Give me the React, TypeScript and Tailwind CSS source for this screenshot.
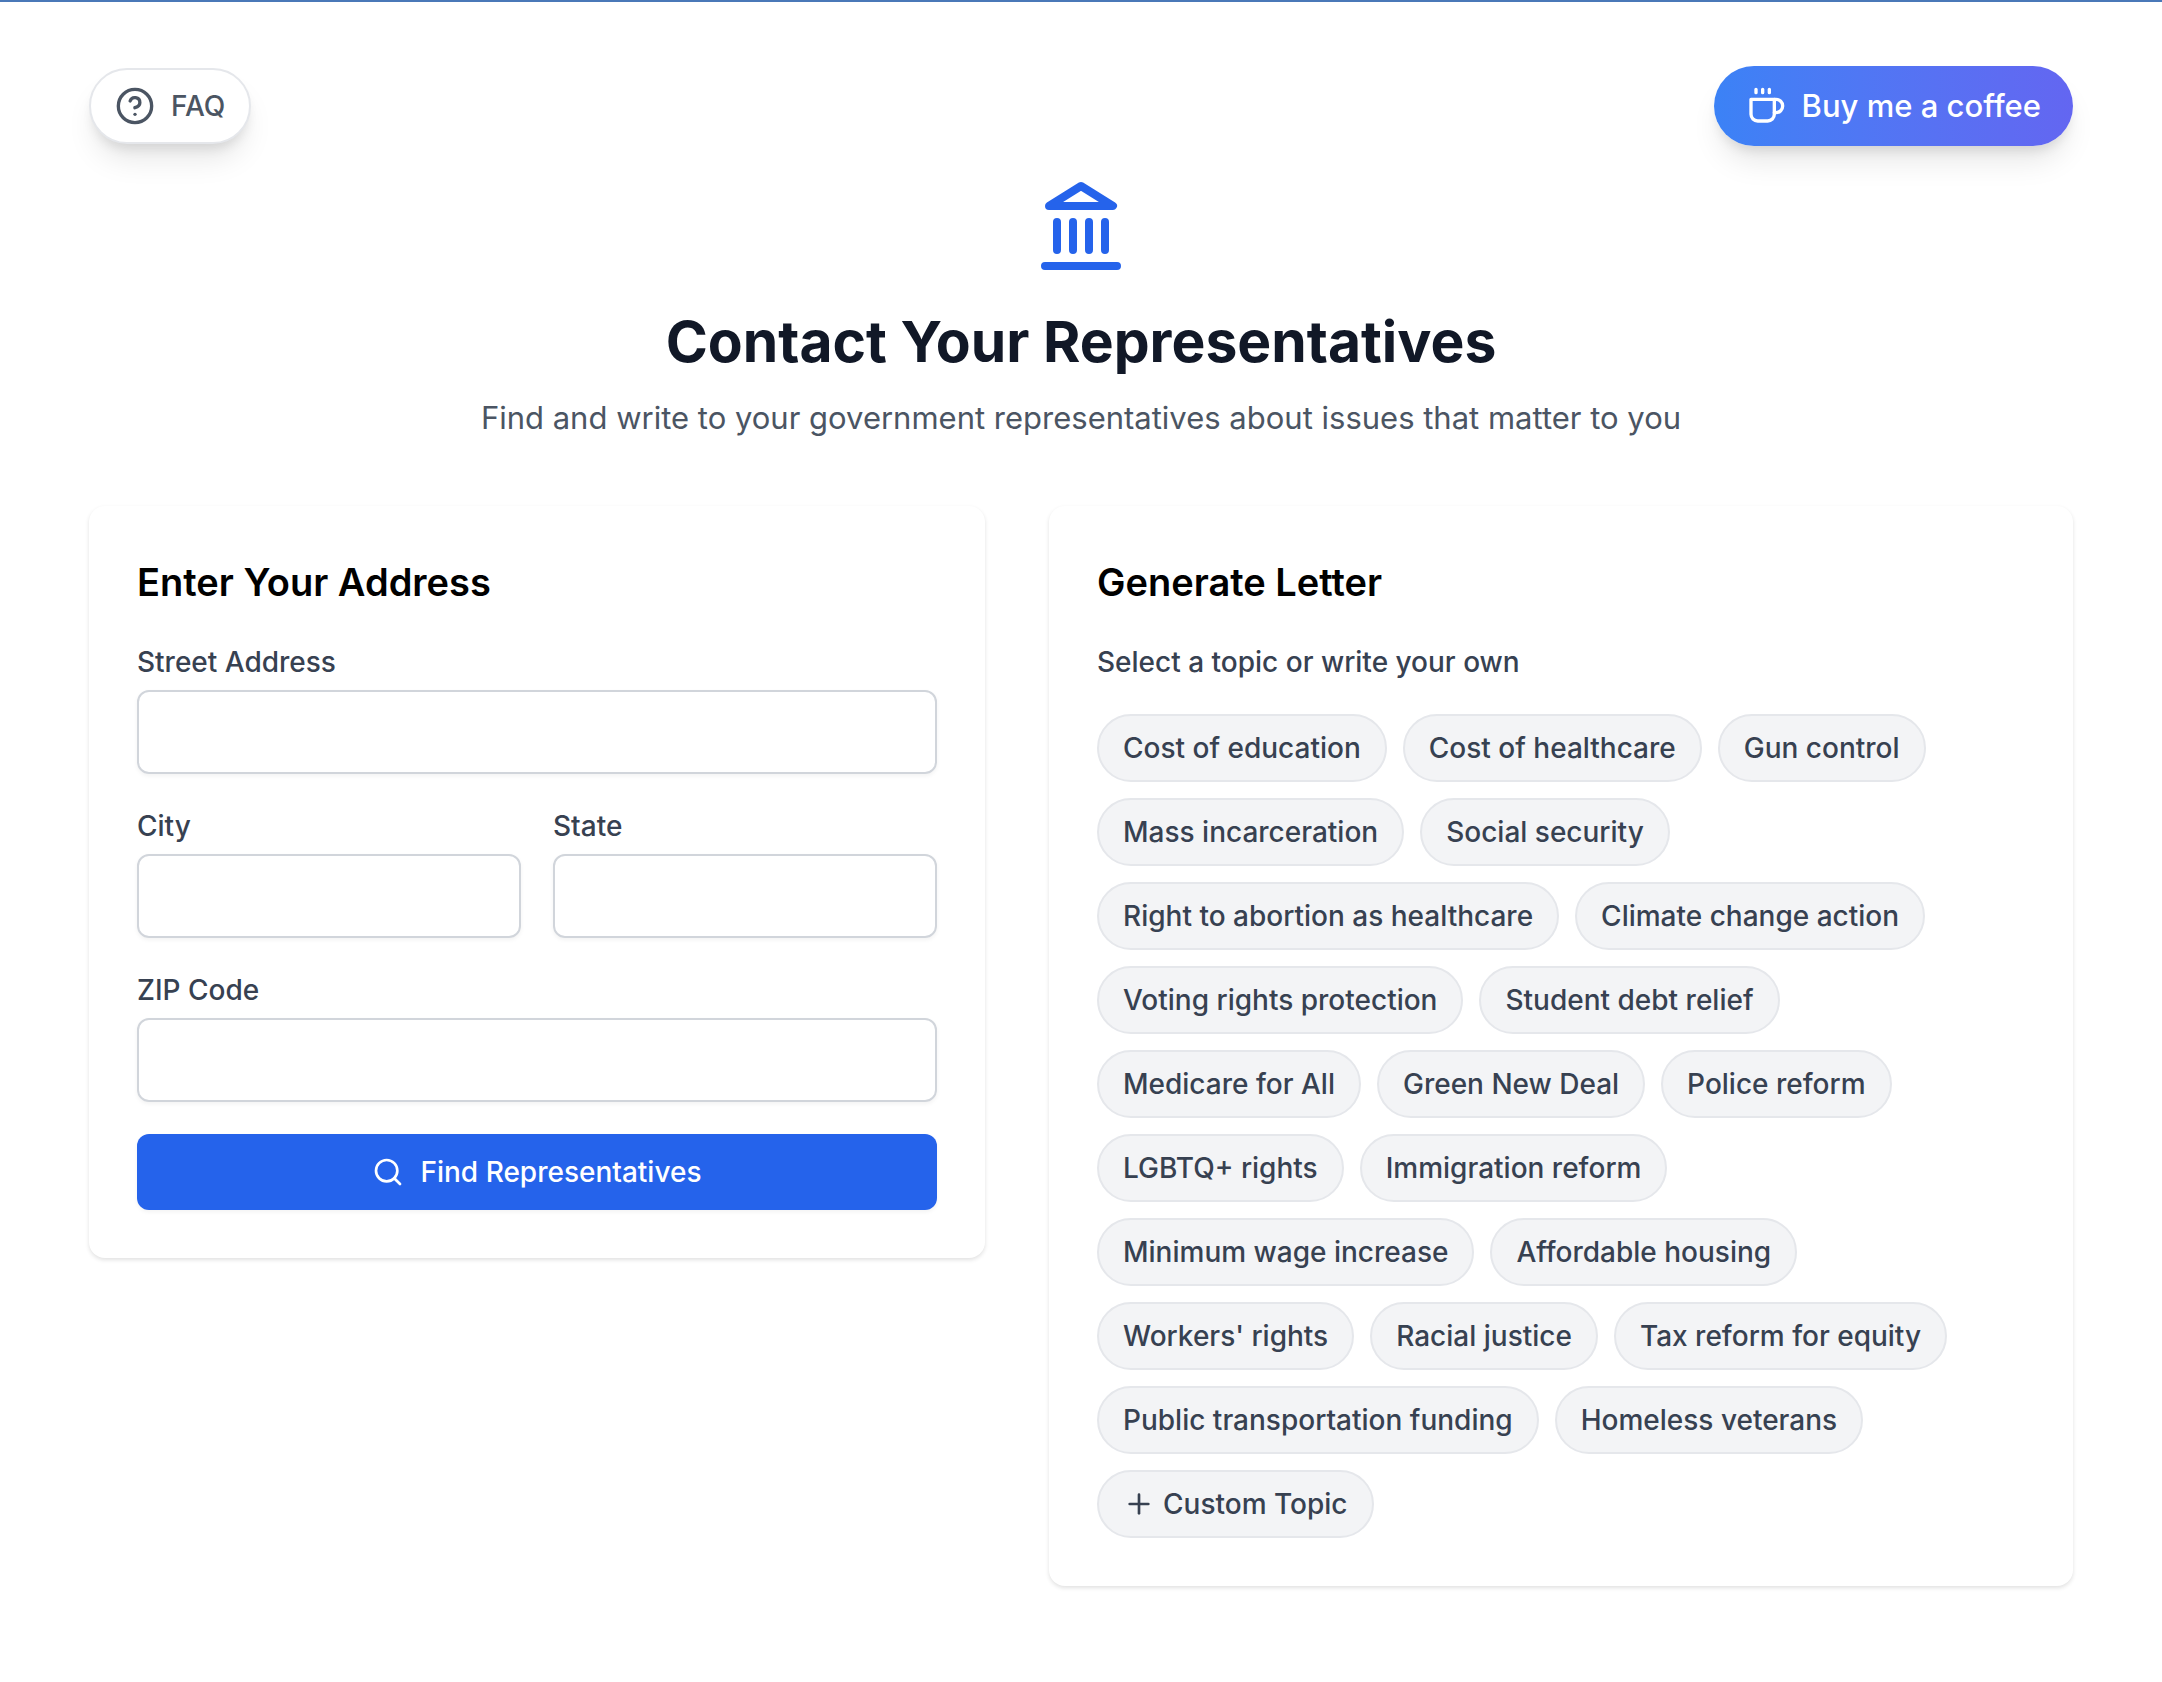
// App.tsx
import React from 'react';
import { CircleHelp, Plus, Search } from 'lucide-react';

const topics = [
    'Cost of education',
    'Cost of healthcare',
    'Gun control',
    'Mass incarceration',
    'Social security',
    'Right to abortion as healthcare',
    'Climate change action',
    'Voting rights protection',
    'Student debt relief',
    'Medicare for All',
    'Green New Deal',
    'Police reform',
    'LGBTQ+ rights',
    'Immigration reform',
    'Minimum wage increase',
    'Affordable housing',
    "Workers' rights",
    'Racial justice',
    'Tax reform for equity',
    'Public transportation funding',
    'Homeless veterans',
];

const CoffeeIcon: React.FC = () => (
    <svg
        className="size-10"
        viewBox="0 0 24 24"
        fill="none"
        stroke="currentColor"
        strokeWidth="2"
        strokeLinecap="round"
        strokeLinejoin="round"
        aria-hidden="true"
    >
        <path d="M17 8h1a4 4 0 1 1 0 8h-1" />
        <path d="M3 8h14v9a4 4 0 0 1-4 4H7a4 4 0 0 1-4-4Z" />
        <path d="M6 2v2M10 2v2M14 2v2" />
    </svg>
);

const LandmarkIcon: React.FC = () => (
    <svg
        className="size-24 text-[#2563eb]"
        viewBox="0 0 24 24"
        fill="none"
        stroke="currentColor"
        strokeWidth="2"
        strokeLinecap="round"
        strokeLinejoin="round"
        aria-hidden="true"
    >
        <path d="M3 22h18M6 18v-7M10 18v-7M14 18v-7M18 18v-7" />
        <path d="M12 2l8 5H4Z" />
    </svg>
);

const Card: React.FC<{ title: string; children: React.ReactNode }> = ({ title, children }) => (
    <section className="bg-white rounded-2xl p-12 shadow-[0_2px_4px_rgba(0,0,0,0.12)]">
        <h2 className="text-[38px] leading-14 font-semibold text-black mb-8">{title}</h2>
        {children}
    </section>
);

const Field: React.FC<{ id: string; label: string }> = ({ id, label }) => (
    <div>
        <label htmlFor={id} className="block text-[28px] leading-10 font-medium text-[#374151] mb-2">
            {label}
        </label>
        <input
            id={id}
            type="text"
            className="block w-full h-21 px-6 text-[28px] rounded-xl border-2 border-[#d1d5db] shadow-[0_2px_4px_rgba(0,0,0,0.05)]"
        />
    </div>
);

const Chip: React.FC<{ children: React.ReactNode }> = ({ children }) => (
    <button
        type="button"
        className="flex items-center gap-2 px-6 py-3 rounded-full border-2 border-[#e5e7eb] bg-[#f3f4f6] text-[28px] leading-10 font-medium text-[#374151]"
    >
        {children}
    </button>
);

const App: React.FC = () => {
    return (
        <div className="min-h-screen bg-white border-t-2 border-[#4a78b8] font-[Inter,sans-serif]">
            <div className="max-w-[2048px] mx-auto px-8 py-16">
                <nav className="flex items-center justify-between mb-8">
                    <button
                        type="button"
                        className="flex items-center gap-4 px-6 py-4 rounded-full border-2 border-[#e5e7eb] bg-white text-[28px] leading-10 font-medium text-[#4b5563] shadow-[0_20px_30px_-6px_rgba(0,0,0,0.1),0_8px_12px_-4px_rgba(0,0,0,0.1)]"
                    >
                        <CircleHelp className="size-10" />
                        FAQ
                    </button>
                    <a
                        href="#coffee"
                        className="flex items-center gap-4 px-8 py-4 rounded-full bg-linear-to-r from-[#3b82f6] to-[#6366f1] text-[31px] leading-12 font-medium text-white shadow-[0_20px_30px_-6px_rgba(0,0,0,0.1),0_8px_12px_-4px_rgba(0,0,0,0.1)]"
                    >
                        <CoffeeIcon />
                        Buy me a coffee
                    </a>
                </nav>

                <header className="flex flex-col items-center text-center mb-16">
                    <LandmarkIcon />
                    <h1 className="mt-8 text-[57px] leading-18 font-bold text-[#111827]">Contact Your Representatives</h1>
                    <p className="mt-4 text-[31px] leading-12 text-[#4b5563]">
                        Find and write to your government representatives about issues that matter to you
                    </p>
                </header>

                <main className="grid grid-cols-1 lg:grid-cols-[7fr_8fr] gap-16 items-start">
                    <Card title="Enter Your Address">
                        <form className="flex flex-col gap-8">
                            <Field id="street" label="Street Address" />
                            <div className="grid grid-cols-2 gap-8">
                                <Field id="city" label="City" />
                                <Field id="state" label="State" />
                            </div>
                            <Field id="zip" label="ZIP Code" />
                            <button
                                type="submit"
                                className="flex items-center justify-center gap-4 h-19 rounded-xl bg-[#2563eb] text-[28px] leading-10 font-medium text-white shadow-[0_2px_4px_rgba(0,0,0,0.05)]"
                            >
                                <Search className="size-8" />
                                Find Representatives
                            </button>
                        </form>
                    </Card>

                    <Card title="Generate Letter">
                        <p className="text-[28px] leading-10 font-medium text-[#374151] mb-8">
                            Select a topic or write your own
                        </p>
                        <div className="flex flex-wrap gap-4">
                            {topics.map((topic) => (
                                <Chip key={topic}>{topic}</Chip>
                            ))}
                            <Chip>
                                <Plus className="size-8" />
                                Custom Topic
                            </Chip>
                        </div>
                    </Card>
                </main>
            </div>
        </div>
    );
};

export default App;
